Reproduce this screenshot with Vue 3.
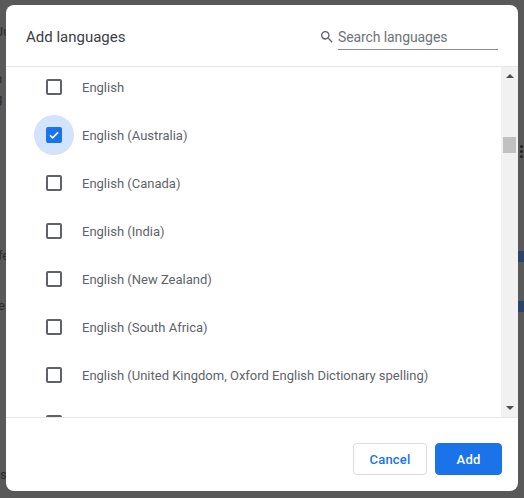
<template>
  <div class="page">
    <!-- bits of the settings page that show past the dialog edges -->
    <span class="peek" style="top: 24px; left: -4px">Ju</span>
    <span class="peek" style="top: 71px; left: -5px">n</span>
    <span class="peek" style="top: 91px; left: -5px">g</span>
    <span class="peek" style="top: 248px; left: -2px">fe</span>
    <span class="peek" style="top: 298px; left: -2px">e</span>
    <span class="peek" style="top: 467px; left: 0">s</span>
    <span class="dots"><i></i><i></i><i></i></span>
    <span class="stripe" style="top: 251px"></span>
    <span class="stripe" style="top: 301px"></span>

    <div class="dialog">
      <header class="head">
        <h2>Add languages</h2>
        <div class="search">
          <svg width="16" height="16" viewBox="0 0 24 24" fill="#5f6368">
            <path d="M15.5 14h-.79l-.28-.27A6.47 6.47 0 0 0 16 9.5 6.5 6.5 0 1 0 9.5 16c1.61 0 3.09-.59 4.23-1.57l.27.28v.79l5 4.99L20.49 19l-4.99-5zm-6 0C7.01 14 5 11.99 5 9.5S7.01 5 9.5 5 14 7.01 14 9.5 11.99 14 9.5 14z" />
          </svg>
          <input type="text" placeholder="Search languages" />
        </div>
      </header>

      <div class="body">
        <div class="list">
          <label v-for="(lang, i) in languages" :key="i" class="row">
            <span class="box-wrap" :class="{ on: lang.checked }">
              <span class="box">
                <svg v-if="lang.checked" width="12" height="12" viewBox="0 0 12 12" fill="none">
                  <path d="M2 6.2l2.7 2.7L10 3.4" stroke="#fff" stroke-width="1.6" />
                </svg>
              </span>
            </span>
            <span class="name">{{ lang.name }}</span>
          </label>
        </div>
        <div class="scrollbar">
          <span class="arrow up"></span>
          <span class="thumb"></span>
          <span class="arrow down"></span>
        </div>
      </div>

      <footer class="foot">
        <button class="btn cancel">Cancel</button>
        <button class="btn add">Add</button>
      </footer>
    </div>
  </div>
</template>

<script setup>
// last row is cut off by the footer, only the top of its box shows
const languages = [
  { name: 'English' },
  { name: 'English (Australia)', checked: true },
  { name: 'English (Canada)' },
  { name: 'English (India)' },
  { name: 'English (New Zealand)' },
  { name: 'English (South Africa)' },
  { name: 'English (United Kingdom, Oxford English Dictionary spelling)' },
  { name: '' },
];
</script>

<style scoped>
.page {
  position: relative;
  box-sizing: border-box;
  width: 524px;
  height: 498px;
  padding: 5px 6px 7px;
  background: #595959;
  overflow: hidden;
  font-family: Roboto, 'Liberation Sans', sans-serif;
}

.peek {
  position: absolute;
  font-size: 13px;
  color: #2b2b2b;
}
.dots {
  position: absolute;
  top: 145px;
  left: 520px;
  display: flex;
  flex-direction: column;
  gap: 2px;
}
.dots i {
  width: 3px;
  height: 3px;
  border-radius: 50%;
  background: #222;
}
.stripe {
  position: absolute;
  left: 518px;
  width: 6px;
  height: 11px;
  background: #2c4266;
}

.dialog {
  position: relative;
  height: 100%;
  display: flex;
  flex-direction: column;
  background: #fff;
  border-radius: 8px;
  overflow: hidden;
}

.head {
  flex: none;
  height: 62px;
  box-sizing: border-box;
  display: flex;
  align-items: center;
  justify-content: space-between;
  padding: 3px 20px 0;
  border-bottom: 1px solid #e6e6e6;
}
.head h2 {
  margin: 0;
  font-size: 15px;
  font-weight: 400;
  color: #3c4043;
}
.search {
  display: flex;
  align-items: center;
  gap: 3px;
}
.search input {
  width: 160px;
  height: 26px;
  box-sizing: border-box;
  padding: 0;
  border: 0;
  border-bottom: 1px solid #8a8a8a;
  outline: 0;
  font: 14px Roboto, 'Liberation Sans', sans-serif;
  letter-spacing: -0.1px;
}
.search input::placeholder {
  color: #6f7377;
  opacity: 1;
}

.body {
  flex: 1;
  min-height: 0;
  display: flex;
  border-bottom: 1px solid #e6e6e6;
}
.list {
  flex: 1;
  overflow: hidden;
}
.row {
  display: flex;
  align-items: center;
  height: 48px;
  padding-left: 28px;
  gap: 8px;
}
.row:first-child {
  margin-top: -4px;
}
.box-wrap {
  width: 40px;
  height: 40px;
  display: flex;
  align-items: center;
  justify-content: center;
  border-radius: 50%;
}
.box-wrap.on {
  background: #d2e3fc;
}
.box {
  width: 16px;
  height: 16px;
  box-sizing: border-box;
  display: flex;
  align-items: center;
  justify-content: center;
  border: 2px solid #5f6368;
  border-radius: 2px;
}
.on .box {
  background: #1a73e8;
  border-color: #1a73e8;
}
.name {
  font-size: 13px;
  color: #5f6368;
}

.scrollbar {
  flex: none;
  width: 17px;
  display: flex;
  flex-direction: column;
  align-items: center;
  background: #f1f1f1;
}
.arrow {
  width: 0;
  height: 0;
  border-left: 4px solid transparent;
  border-right: 4px solid transparent;
}
.arrow.up {
  margin-top: 7px;
  border-bottom: 4px solid #505050;
}
.thumb {
  width: 13px;
  height: 16px;
  margin-top: 59px;
  background: #c1c1c1;
}
.arrow.down {
  margin-top: auto;
  margin-bottom: 7px;
  border-top: 4px solid #505050;
}

.foot {
  flex: none;
  height: 73px;
  box-sizing: border-box;
  display: flex;
  justify-content: flex-end;
  gap: 8px;
  padding: 25px 16px 0 0;
}
.btn {
  height: 32px;
  border-radius: 4px;
  font: 500 13px Roboto, 'Liberation Sans', sans-serif;
  letter-spacing: 0.2px;
  padding: 0;
}
.cancel {
  width: 74px;
  background: #fff;
  border: 1px solid #dadce0;
  color: #1a73e8;
}
.add {
  width: 67px;
  background: #1a73e8;
  border: 1px solid #1a73e8;
  color: #fff;
}
</style>
